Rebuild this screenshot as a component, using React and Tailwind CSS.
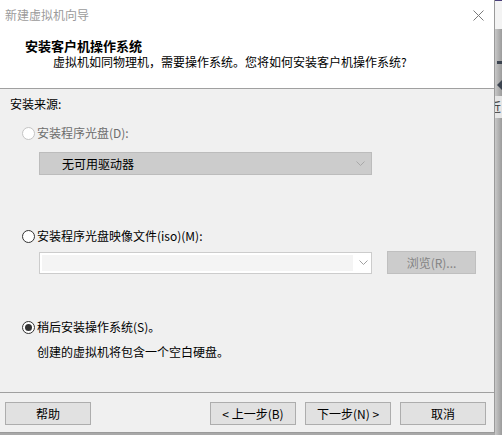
import React from "react";

const font = { fontFamily: '"Noto Sans CJK SC", "Microsoft YaHei", sans-serif' };

function Radio({ checked, disabled }) {
  return (
    <span
      className={
        "relative flex h-[13px] w-[13px] shrink-0 items-center justify-center rounded-full border " +
        (disabled ? "border-[#c4c4c4] bg-white" : "border-[#333333] bg-white")
      }
    >
      {checked && <span className="h-[7px] w-[7px] rounded-full bg-[#333333]" />}
    </span>
  );
}

function Chevron({ color = "#9a9a9a" }) {
  return (
    <svg width="9" height="5" viewBox="0 0 9 5" className="shrink-0">
      <path d="M0.5 0.5 L4.5 4.5 L8.5 0.5" fill="none" stroke={color} strokeWidth="1" />
    </svg>
  );
}

function Btn({ children }) {
  return (
    <div className="flex h-[23px] w-[86px] items-center justify-center border border-[#adadad] bg-[#e1e1e1] text-[12px] leading-none text-black">
      {children}
    </div>
  );
}

export default function App() {
  return (
    <div className="flex h-[435px] w-[502px] overflow-hidden bg-[#a8a8a8]" style={font}>
      <div className="flex h-[433px] w-[495px] shrink-0 flex-col border-r border-b border-[#9a9a9a] bg-[#f0f0f0]">
        {/* title bar */}
        <div className="flex h-[30px] items-center justify-between bg-white pl-[5px] pr-[10px]">
          <span className="text-[12px] leading-none text-[#9b9b9b]">新建虚拟机向导</span>
          <svg width="11" height="11" viewBox="0 0 11 11">
            <path d="M0.5 0.5 L10.5 10.5 M10.5 0.5 L0.5 10.5" stroke="#7a7a7a" strokeWidth="1" />
          </svg>
        </div>
        {/* header */}
        <div className="flex h-[59px] flex-col border-b border-[#a0a0a0] bg-white pt-[8px]">
          <div className="pl-[25px] text-[13px] font-bold leading-[16px] text-black">安装客户机操作系统</div>
          <div className="pl-[53px] text-[12px] leading-[16px] text-black">
            虚拟机如同物理机，需要操作系统。您将如何安装客户机操作系统?
          </div>
        </div>
        {/* body */}
        <div className="flex flex-1 flex-col pl-[10px] pt-[7px] text-[12px] leading-[16px] text-black">
          <div>安装来源:</div>
          <div className="ml-[12px] mt-[13px] flex h-[16px] items-center gap-[2px]">
            <Radio disabled />
            <span className="text-[#6d6d6d]">安装程序光盘(D):</span>
          </div>
          <div className="ml-[29px] mt-[11px] flex h-[23px] w-[333px] items-center justify-between border border-[#bcbcbc] bg-[#cccccc] pl-[22px] pr-[6px]">
            <span>无可用驱动器</span>
            <Chevron color="#a8a8a8" />
          </div>
          <div className="ml-[12px] mt-[53px] flex h-[16px] items-center gap-[2px]">
            <Radio />
            <span>安装程序光盘映像文件(iso)(M):</span>
          </div>
          <div className="mt-[7px] flex items-center">
            <div className="ml-[29px] flex h-[22px] w-[333px] items-stretch border border-[#cccccc] bg-white">
              <div className="m-[2px] flex-1 bg-[#f4f4f4]" />
              <div className="flex w-[16px] items-center justify-center">
                <Chevron color="#a0a0a0" />
              </div>
            </div>
            <div className="ml-[15px] flex h-[23px] w-[89px] items-center justify-center border border-[#bfbfbf] bg-[#cccccc] text-[#838383]">
              浏览(R)...
            </div>
          </div>
          <div className="ml-[12px] mt-[45px] flex h-[16px] items-center gap-[2px]">
            <Radio checked />
            <span>稍后安装操作系统(S)。</span>
          </div>
          <div className="ml-[27px] mt-[9px]">创建的虚拟机将包含一个空白硬盘。</div>
        </div>
        {/* footer */}
        <div className="flex h-[40px] items-start border-t border-[#a0a0a0] px-[5px] pt-[9px]">
          <Btn>帮助</Btn>
          <div className="ml-auto mr-[3px] flex gap-[9px]">
            <Btn>&lt; 上一步(B)</Btn>
            <Btn>下一步(N) &gt;</Btn>
            <Btn>取消</Btn>
          </div>
        </div>
      </div>
      {/* background strip */}
      <div className="flex flex-1 flex-col bg-gradient-to-r from-[#c8c8c8] to-[#9c9c9c]">
        <div className="h-[1px] bg-[#4a3f7a]" />
        <div className="h-[28px] bg-[#f3f3f3]" />
        <div className="mt-[32px] ml-[2px] h-[3px] bg-[#3c4450]" />
        <div className="mt-[16px] ml-[2px] h-0 w-0 border-y-[5px] border-r-[5px] border-y-transparent border-r-[#3c4450]" />
        <div className="mt-[6px] h-[22px] overflow-hidden bg-[#e6e6e6] text-[12px] leading-[22px] text-[#333]">
          <span className="-ml-[6px] inline-block">近</span>
        </div>
      </div>
    </div>
  );
}
